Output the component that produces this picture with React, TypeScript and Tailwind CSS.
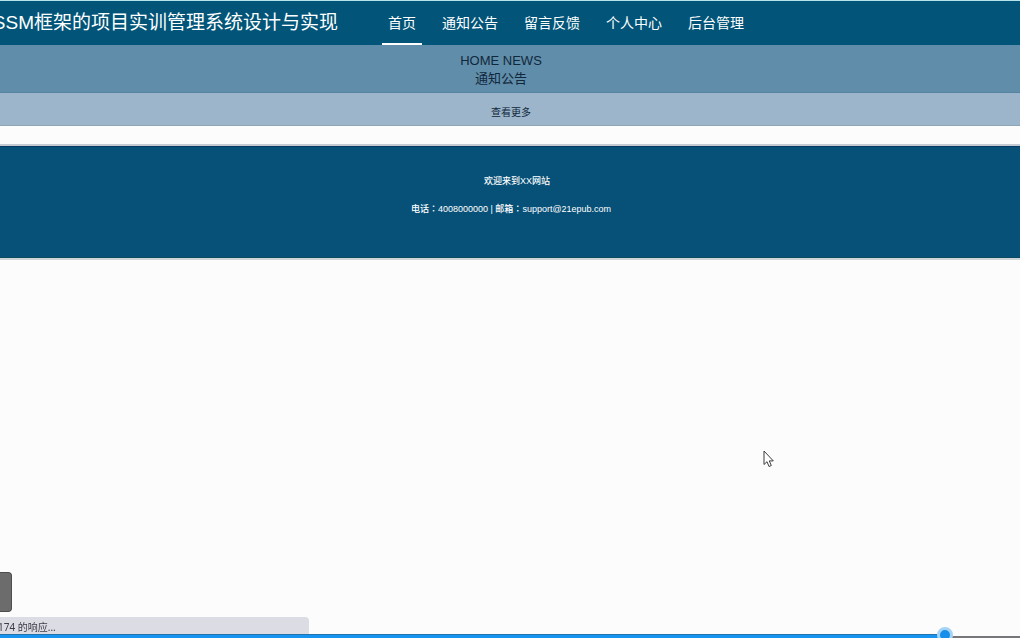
import { useState } from "react";

const navItems = ["首页", "通知公告", "留言反馈", "个人中心", "后台管理"];

function Header() {
  return (
    <header className="flex h-[45px] items-stretch gap-11 overflow-hidden border-t border-[#b5e3ea] bg-[#025578] text-white">
      <h1 className="flex w-[338px] shrink-0 items-center justify-end whitespace-nowrap text-[19px]">
        SSM框架的项目实训管理系统设计与实现
      </h1>
      <nav className="flex gap-[14px] whitespace-nowrap text-sm">
        {navItems.map((item, i) => (
          <a
            key={item}
            href="#"
            className={
              i === 0
                ? "flex items-center border-b-2 border-white px-[6px] pt-0.5"
                : "flex items-center border-b-2 border-transparent px-[6px] pt-0.5"
            }
          >
            {item}
          </a>
        ))}
      </nav>
    </header>
  );
}

function News() {
  return (
    <section className="text-center text-[#10283c]">
      <div className="h-12 border-b border-[#5684a0] bg-[#608da9] pt-[7px] pr-[18px] text-[13px] leading-[18px]">
        <h2>HOME NEWS</h2>
        <p>通知公告</p>
      </div>
      <div className="flex h-[33px] items-center justify-center border-b border-[#8fa6b5] bg-[#9cb5ca] pt-[7px] pl-0.5 text-[10px]">
        <a href="#">查看更多</a>
      </div>
    </section>
  );
}

function Footer() {
  return (
    <footer className="mt-[18px] border-t-2 border-b-2 border-t-[#c5cad3] border-b-[#cfd5d6]">
      <div className="h-28 border-t border-b border-t-[#063b66] border-b-[#0b4a60] bg-[#075178] pt-5 pl-0.5 text-center text-[9px] leading-7 font-medium text-white">
        <p className="pl-3">欢迎来到XX网站</p>
        <p>
          电话<span lang="zh-TW" className="font-['Noto_Sans_CJK_TC',sans-serif]">：</span>4008000000 | 邮箱
          <span lang="zh-TW" className="font-['Noto_Sans_CJK_TC',sans-serif]">：</span>support@21epub.com
        </p>
      </div>
    </footer>
  );
}

function PlayerBar() {
  const [position, setPosition] = useState(933);

  return (
    <div className="relative flex h-[11px] items-end overflow-hidden">
      <div
        className="h-1 border-t border-[#2473ab] bg-[#1593f0]"
        style={{ width: `${position / 10}%` }}
      />
      <div className="h-0.5 flex-1 bg-[#77777b]" />
      <input
        type="range"
        aria-label="播放进度"
        min={0}
        max={1000}
        value={position}
        onChange={(e) => setPosition(Number(e.target.value))}
        className="absolute top-0 left-0 h-4 w-full appearance-none bg-transparent [&::-webkit-slider-thumb]:size-4 [&::-webkit-slider-thumb]:appearance-none [&::-webkit-slider-thumb]:rounded-full [&::-webkit-slider-thumb]:border-[3px] [&::-webkit-slider-thumb]:border-[#a5d3f5] [&::-webkit-slider-thumb]:bg-[#158fe9]"
      />
    </div>
  );
}

function Pointer() {
  return (
    <svg
      className="pointer-events-none fixed top-[450px] left-[763px]"
      width="12"
      height="18"
      viewBox="0 0 12 18"
      aria-hidden="true"
    >
      <path
        d="M1 1v13.5l3-2.8 2 4.8 2.3-1-2-4.6h4z"
        fill="#fff"
        stroke="#3c3c40"
        strokeLinejoin="round"
      />
    </svg>
  );
}

export default function App() {
  return (
    <div
      lang="zh-CN"
      className="min-h-screen bg-[#fcfcfc] font-['Liberation_Sans','Noto_Sans_CJK_SC',sans-serif]"
    >
      <Header />
      <main>
        <News />
      </main>
      <Footer />

      <div className="fixed inset-x-0 bottom-0">
        <button
          type="button"
          aria-label="展开"
          className="mb-[5px] block h-10 w-3 rounded-r-sm border border-l-0 border-[#4e4e4e] bg-[#6c6c6c]"
        />
        <div className="flex h-[17px] w-[309px] overflow-hidden rounded-tr-sm bg-[#dcdde4] pt-px font-['Noto_Sans','Noto_Sans_CJK_SC',sans-serif] text-[10px] leading-[18px] text-[#3c3d45]">
          <span className="-ml-0.5">174 的响应...</span>
        </div>
        <div className="-mt-[7px]">
          <PlayerBar />
        </div>
      </div>
      <Pointer />
    </div>
  );
}
